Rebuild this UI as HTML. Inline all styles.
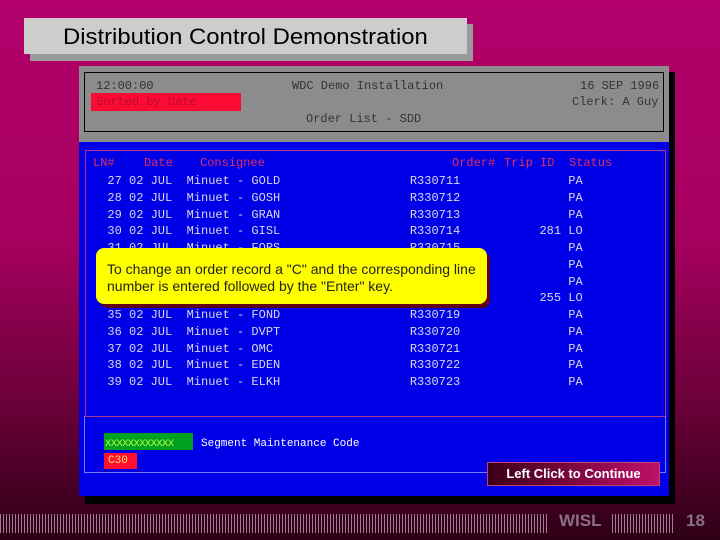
<!DOCTYPE html>
<html><head><style>
*{margin:0;padding:0;box-sizing:border-box}
body{width:720px;height:540px;overflow:hidden;position:relative;background:linear-gradient(#b3006b 0%,#a5005f 45%,#6a0038 75%,#2e0016 100%);font-family:"Liberation Sans",sans-serif}
.a{position:absolute}
.m{font-family:"Liberation Mono",monospace;font-size:12px;white-space:pre;line-height:14px}
</style></head><body>
<div class="a" style="left:30px;top:24px;width:443px;height:37px;background:#9a9a9a"></div>
<div class="a" style="left:24px;top:18px;width:443px;height:36px;background:#cdcdcd;font-size:22px;line-height:38px;padding-left:39px;color:#000"><span style="display:inline-block;transform:scaleX(1.085);transform-origin:left">Distribution Control Demonstration</span></div>

<div class="a" style="left:85px;top:72px;width:590px;height:432px;background:#000"></div>
<div class="a" style="left:79px;top:66px;width:590px;height:76px;background:#8c8c8c"></div>
<div class="a" style="left:84px;top:72px;width:580px;height:60px;border:1px solid #000"></div>
<div class="a m" style="left:96px;top:79px;color:#333">12:00:00</div>
<div class="a m" style="left:292px;top:79px;color:#333">WDC Demo Installation</div>
<div class="a m" style="left:580px;top:79px;color:#333">16 SEP 1996</div>
<div class="a" style="left:91px;top:93px;width:150px;height:18px;background:#ff0a35"></div>
<div class="a m" style="left:96px;top:95px;color:#b0102a">Sorted by Date</div>
<div class="a m" style="left:572px;top:95px;color:#333">Clerk: A Guy</div>
<div class="a m" style="left:306px;top:112px;color:#333">Order List - SDD</div>

<div class="a" style="left:79px;top:142px;width:590px;height:354px;background:#0000e6"></div>
<div class="a" style="left:85px;top:150px;width:581px;height:267px;border:1px solid #b03090"></div>
<div class="a" style="left:84px;top:416px;width:582px;height:57px;border:1px solid #6a80ff;border-top:none"></div>

<div class="a m" style="left:93px;top:156px;color:#e03060">LN#</div>
<div class="a m" style="left:144px;top:156px;color:#e03060">Date</div>
<div class="a m" style="left:200px;top:156px;color:#e03060">Consignee</div>
<div class="a m" style="left:452px;top:156px;color:#e03060">Order#</div>
<div class="a m" style="left:504px;top:156px;color:#e03060">Trip ID</div>
<div class="a m" style="left:569px;top:156px;color:#e03060">Status</div>
<div class="a m" style="left:93px;top:173px;color:#d8d8e8;line-height:16.75px">  27 02 JUL  Minuet - GOLD                  R330711               PA
  28 02 JUL  Minuet - GOSH                  R330712               PA
  29 02 JUL  Minuet - GRAN                  R330713               PA
  30 02 JUL  Minuet - GISL                  R330714           281 LO
  31 02 JUL  Minuet - FORS                  R330715               PA
  32 02 JUL  Minuet - FORT                  R330716               PA
  33 02 JUL  Minuet - FOXH                  R330717               PA
  34 02 JUL  Minuet - FRAN                  R330718           255 LO
  35 02 JUL  Minuet - FOND                  R330719               PA
  36 02 JUL  Minuet - DVPT                  R330720               PA
  37 02 JUL  Minuet - OMC                   R330721               PA
  38 02 JUL  Minuet - EDEN                  R330722               PA
  39 02 JUL  Minuet - ELKH                  R330723               PA</div>

<div class="a" style="left:100px;top:252px;width:390px;height:56px;background:#600018;border-radius:8px"></div>
<div class="a" style="left:96px;top:248px;width:391px;height:56px;background:#ffff00;border-radius:8px;font-size:14px;line-height:17px;color:#222;padding:13px 0 0 11px">To change an order record a "C" and the corresponding line<br>number is entered followed by the "Enter" key.</div>

<div class="a" style="left:104px;top:433px;width:89px;height:17px;background:#00a020"></div>
<div class="a m" style="left:105px;top:437px;color:#b8ff40;font-size:10.5px;letter-spacing:-0.6px">XXXXXXXXXXXX</div>
<div class="a m" style="left:201px;top:437px;color:#fff;font-size:11px">Segment Maintenance Code</div>
<div class="a" style="left:104px;top:453px;width:33px;height:16px;background:#ff1030"></div>
<div class="a m" style="left:108px;top:454px;color:#ffe060;font-size:11px">C30</div>

<div class="a" style="left:487px;top:462px;width:173px;height:24px;background:linear-gradient(90deg,#3a0018,#c0106a);border:1px solid #c04080;color:#fff;font-weight:bold;font-size:13px;line-height:22px;text-align:center">Left Click to Continue</div>

<div class="a" style="left:0;top:514px;width:548px;height:19px;background:repeating-linear-gradient(90deg,#9a8090 0 1px,transparent 1px 3px)"></div>
<div class="a" style="left:559px;top:511px;font-size:17px;font-weight:bold;color:#8a7080">WISL</div>
<div class="a" style="left:612px;top:514px;width:63px;height:19px;background:repeating-linear-gradient(90deg,#9a8090 0 1px,transparent 1px 3px)"></div>
<div class="a" style="left:686px;top:511px;font-size:17px;font-weight:bold;color:#8a7080">18</div>
</body></html>
